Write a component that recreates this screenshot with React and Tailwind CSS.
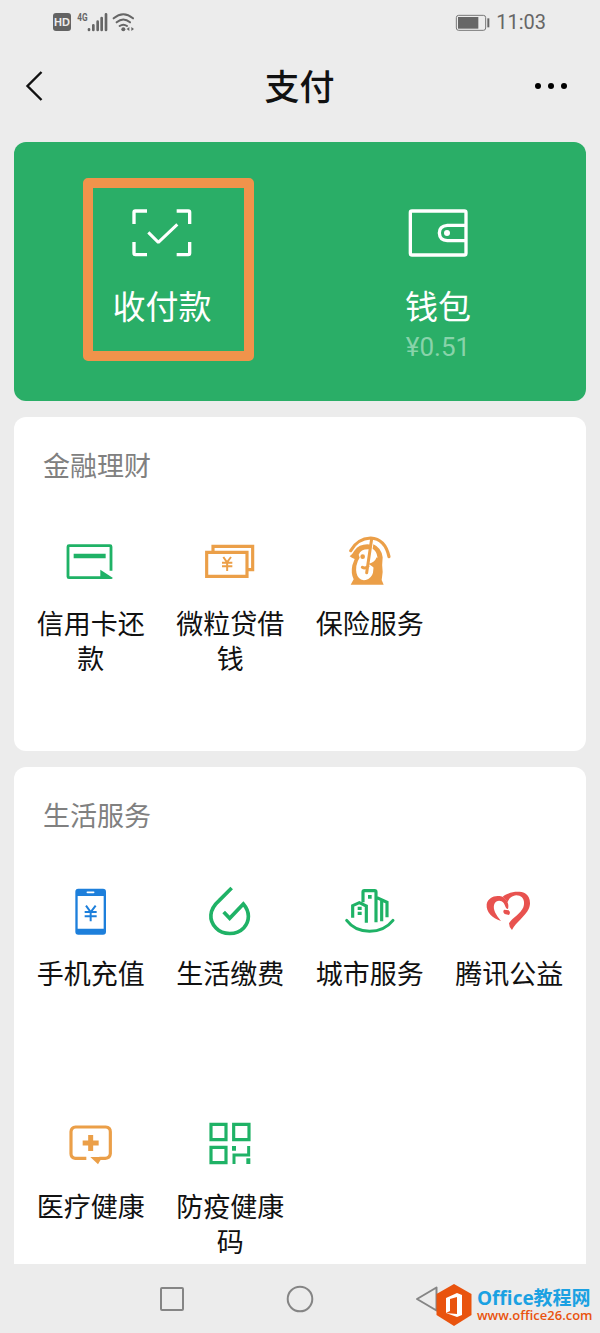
import clsx from 'clsx'

const GREEN = '#1fb266'
const ORANGE = '#eb9f48'
const BLUE = '#1d7fdb'
const RED = '#e8524f'

const ServiceIcon = ({ origin, children }) => (
  <svg viewBox={`${origin} 180 180`} className="w-[60px] h-[60px]" fill="none">
    {children}
  </svg>
)

const CreditCardIcon = () => (
  <ServiceIcon origin="93 36">
    <path d="M243 152V80Q243 77 240 77H117Q114 77 114 80V170Q114 173 117 173H232" stroke={GREEN} strokeWidth="8.5" />
    <path d="M131 101H227V115H131Z" fill={GREEN} />
    <path d="M211 149L248 173Q248 177 243 177H211Z" fill={GREEN} />
  </ServiceIcon>
)

const LoanIcon = () => (
  <ServiceIcon origin="512 36">
    <path d="M551 94V79H670V149H656" stroke={ORANGE} strokeWidth="9.5" />
    <path d="M532 97H653V169H532Z" stroke={ORANGE} strokeWidth="9.5" />
    <path d="M582 111L593 127L605 111M578 128H609M578 139H609M593.500 127V153" stroke={ORANGE} strokeWidth="6" />
  </ServiceIcon>
)

const InsuranceIcon = () => (
  <ServiceIcon origin="121 36">
    <path d="M153 92Q173 56 213 54Q256 56 268 110" stroke={ORANGE} strokeWidth="9.5" strokeLinecap="round" />
    <path
      d="M150 109Q158 103 164 92Q178 73 203 73L213 74L210 88Q184 86 177 104L180 113Q173 122 170 138Q167 163 178 174Q184 182 198 180Q216 174 220 158L222 138Q235 127 233 110Q231 94 219 86L221 73Q245 83 249 112Q246 136 249 156L246 180L252 194H153L162 178Q153 160 158 136L165 117Q156 114 150 109Z"
      fill={ORANGE}
    />
    <path d="M216 56L201 158M188 142Q196 147 205 139" stroke={ORANGE} strokeWidth="9" strokeLinecap="round" />
    <path d="M206 131Q224 130 231 112L240 120L232 150L216 138Z" fill={ORANGE} />
    <circle cx="189" cy="110" r="7" fill={ORANGE} />
  </ServiceIcon>
)

const PhoneIcon = () => (
  <ServiceIcon origin="93 36">
    <rect x="136" y="56" width="92" height="138" rx="9" fill={BLUE} />
    <path d="M143 78H221V176H143Z" fill="#fff" />
    <path d="M172 67H191" stroke="#fff" strokeWidth="5" strokeLinecap="round" />
    <path d="M168 107L182 126L197 107M164 126H200M164 139H200M182 126V154" stroke={BLUE} strokeWidth="6" />
  </ServiceIcon>
)

const BillIcon = () => (
  <ServiceIcon origin="512 36">
    <path
      d="M607 54L570 91C538 119 538 151 560 174C580 196 622 196 643 174C662 153 662 125 642 102L601 145L583 126"
      stroke={GREEN}
      strokeWidth="11"
    />
  </ServiceIcon>
)

const CityIcon = () => (
  <ServiceIcon origin="121 36">
    <path
      d="M159 143V107L179 98L200 108V158M190 97V66Q190 62 194 62H225Q229 62 229 66V157M230 82L262 97V142M246 90V154"
      stroke={GREEN}
      strokeWidth="9.5"
    />
    <path d="M141 151C173 194 245 195 280 151" stroke={GREEN} strokeWidth="9" strokeLinecap="round" />
    <path d="M174 110H186V120H174ZM174 125H186V135H174ZM205 75H216V86H205Z" fill={GREEN} />
  </ServiceIcon>
)

const CharityIcon = () => (
  <ServiceIcon origin="540 36">
    <path
      d="M606 153C579 145 561 127 563 103C566 83 588 74 606 79C622 84 632 102 627 117C620 117 619 107 614 99C606 90 592 90 586 102C580 119 592 136 606 153Z"
      fill={RED}
    />
    <path
      d="M611 80C628 66 660 61 678 70C693 78 697 101 689 117C680 138 651 156 639 180Q630 172 630 160C640 143 665 132 673 112C680 91 670 76 652 76C638 77 628 87 626 97Q620 87 611 80Z"
      fill={RED}
    />
    <path d="M615 119L629 121Q636 127 630 135L617 132Q610 126 615 119Z" fill={RED} />
  </ServiceIcon>
)

const MedicalIcon = () => (
  <ServiceIcon origin="93 15">
    <path
      d="M169 145H136Q123 143 123 131V65Q124 52 137 51H227Q241 52 241 65V131Q240 144 226 145H208"
      stroke={ORANGE}
      strokeWidth="9.5"
    />
    <path d="M181 141H217L204 163Z" fill={ORANGE} />
    <path d="M182 75V123M158 99H206" stroke={ORANGE} strokeWidth="15" />
  </ServiceIcon>
)

const HealthCodeIcon = () => (
  <ServiceIcon origin="512 15">
    <path d="M545 43H590V89H545ZM613 43H659V89H613ZM545 112H590V158H545Z" stroke={GREEN} strokeWidth="9.5" />
    <path d="M608 108H620V122H608ZM651 145H663V162H651Z" fill={GREEN} />
    <path d="M614 162V135H658V108" stroke={GREEN} strokeWidth="9" />
  </ServiceIcon>
)

const ScanIcon = () => (
  <svg viewBox="177 108 198 162" className="w-[66px] h-[54px]" fill="none" stroke="#fff" strokeWidth="10">
    <path d="M192 162V127Q192 123 196 123H231M320 123H355Q359 123 359 127V162M359 216V250Q359 254 355 254H320M231 254H196Q192 254 192 250V216" />
    <path d="M235 187L265 217L322 163" strokeWidth="9" strokeLinejoin="bevel" />
  </svg>
)

const WalletIcon = () => (
  <svg viewBox="75 48 198 162" className="w-[66px] h-[54px]" fill="none" stroke="#fff" strokeWidth="10">
    <rect x="91" y="63" width="167" height="132" rx="5" />
    <path d="M258 106H202Q178 108 178 129Q179 151 202 152H258" />
    <circle cx="201" cy="129" r="9" fill="#fff" stroke="none" />
  </svg>
)

const StatusBar = () => (
  <div className="flex h-11 items-center pl-[53px] pr-[54px] text-[#666]">
    <div className="flex h-[18px] w-[18px] items-center justify-center rounded-[3px] bg-[#636363] font-['Liberation_Sans'] text-[11px] font-bold leading-none text-[#ececec]">
      HD
    </div>
    <svg viewBox="227 30 180 66" className="ml-[5px] h-[22px] w-[60px]" fill="none" stroke="#666" strokeLinecap="round">
      <text
        x="231"
        y="60"
        fontSize="32"
        fontWeight="700"
        textLength="31"
        lengthAdjust="spacingAndGlyphs"
        fill="#666"
        stroke="none"
        className="font-[Roboto]"
      >
        4G
      </text>
      <path d="M266 85V87M279 73V87M292 62V87M304 51V87M317 40V87" strokeWidth="8" />
      <path d="M340 52Q369 28 398 52M349 64Q369 47 389 64M358 75Q369 67 380 75" strokeWidth="6" />
      <circle cx="369" cy="85" r="6" fill="#666" stroke="none" />
      <path d="M379 84L387 78V90ZM401 84L393 78V90Z" fill="#666" stroke="none" />
    </svg>
    <svg viewBox="471 36 105 57" className="ml-auto h-[19px] w-[35px]" fill="none">
      <rect x="475" y="43" width="88" height="45" rx="7" stroke="#777" strokeWidth="3" />
      <rect x="480" y="48" width="61" height="35" fill="#666" />
      <path d="M571 52V79" stroke="#666" strokeWidth="6" />
    </svg>
    <span className="ml-[6px] font-[Roboto] text-[20px] leading-none">11:03</span>
  </div>
)

const NavBar = () => (
  <header className="flex h-[86px] items-center justify-between pl-[25px] pr-[33px] text-[#111]">
    <svg viewBox="0 0 18 32" className="h-8 w-[39px] -translate-y-px" preserveAspectRatio="xMinYMid" fill="none">
      <path d="M16.500 2L2.500 16L16.500 30" stroke="#111" strokeWidth="2.400" />
    </svg>
    <h1 className="pb-[5px] text-[35px] font-medium leading-none">支付</h1>
    <div className="flex w-8 justify-between -translate-y-[1px]">
      <i className="h-[6px] w-[6px] rounded-full bg-black" />
      <i className="h-[6px] w-[6px] rounded-full bg-black" />
      <i className="h-[6px] w-[6px] rounded-full bg-black" />
    </div>
  </header>
)

const PayCard = () => (
  <section className="relative mt-3 flex h-[259px] rounded-[12px] bg-[#2aae67] px-[10px] pt-16 text-white">
    <div className="flex flex-1 flex-col items-center">
      <ScanIcon />
      <span className="mt-[27px] text-[33px] leading-9">收付款</span>
    </div>
    <div className="flex flex-1 flex-col items-center">
      <WalletIcon />
      <span className="mt-[27px] text-[33px] leading-9">钱包</span>
      <span className="mt-[10px] font-[Roboto] text-[26px] leading-7 text-[#88d3aa]">¥0.51</span>
    </div>
    {/* Highlight frame */}
    <div className="absolute left-[69px] top-9 h-[183px] w-[171px] rounded-[5px] border-[10px] border-[#f0934b]" />
  </section>
)

const ServiceSection = ({ title, items, className }) => (
  <section className={clsx('mt-4 overflow-hidden bg-white', className)}>
    <h2 className="h-[101px] pl-[29px] pt-[30px] text-[27px] leading-9 text-[#808080]">{title}</h2>
    <div className="grid grid-cols-4 pl-[7px] pr-[7px]">
      {items.map(({ label, Icon }) => (
        <div key={label} className="flex h-[233px] flex-col items-center pt-[14px]">
          <Icon />
          <span className="mt-[13px] w-[112px] text-center text-[27px] leading-[35px]">{label}</span>
        </div>
      ))}
    </div>
  </section>
)

const finance = [
  { label: '信用卡还款', Icon: CreditCardIcon },
  { label: '微粒贷借钱', Icon: LoanIcon },
  { label: '保险服务', Icon: InsuranceIcon },
]

const life = [
  { label: '手机充值', Icon: PhoneIcon },
  { label: '生活缴费', Icon: BillIcon },
  { label: '城市服务', Icon: CityIcon },
  { label: '腾讯公益', Icon: CharityIcon },
  { label: '医疗健康', Icon: MedicalIcon },
  { label: '防疫健康码', Icon: HealthCodeIcon },
]

const SystemNav = () => (
  <footer className="flex h-[69px] items-center pl-[159px] text-[#858585]">
    <svg viewBox="0 0 26 26" className="h-[26px] w-[26px]" fill="none" stroke="currentColor" strokeWidth="2">
      <rect x="2" y="2" width="22" height="22" rx="1" />
    </svg>
    <svg viewBox="0 0 28 28" className="ml-[101px] h-7 w-7" fill="none" stroke="currentColor" strokeWidth="2">
      <circle cx="14" cy="14" r="12.300" />
    </svg>
    <svg viewBox="0 0 24 28" className="ml-[101px] h-7 w-6" fill="none" stroke="currentColor" strokeWidth="2">
      <path d="M21.500 2.500V25.500L2 14Z" strokeLinejoin="round" />
    </svg>
  </footer>
)

const Watermark = () => (
  <div className="absolute bottom-[6px] left-[436px] flex items-center">
    <svg viewBox="0 0 36 44" className="h-11 w-9" fill="none">
      <path d="M18 1L35.500 11V32L18 43L0.500 32V11Z" fill="#e9530e" />
      <path d="M10 15L21 10L26 12V32L21 34L10 30L21 31V14L14 16V28L10 30Z" fill="#fff" />
    </svg>
    <div className="ml-[5px] flex flex-col">
      <span className="whitespace-nowrap font-['Open_Sans','Noto_Sans_CJK_SC',sans-serif] text-[19px] font-bold leading-[19px] text-[#1ba1e2]">
        Office教程网
      </span>
      <span className="whitespace-nowrap font-['Open_Sans'] text-[13px] font-semibold leading-[14px] text-[#e9530e]">
        www.office26.com
      </span>
    </div>
  </div>
)

const App = () => (
  <div className="relative h-[1333px] w-[600px] overflow-hidden bg-[#ececec] font-['Noto_Sans_CJK_SC',sans-serif] text-[#111]">
    <StatusBar />
    <NavBar />
    <main className="px-[14px]">
      <PayCard />
      <ServiceSection title="金融理财" items={finance} className="h-[334px] rounded-[12px]" />
      <ServiceSection title="生活服务" items={life} className="h-[497px] rounded-t-[12px]" />
    </main>
    <SystemNav />
    <Watermark />
  </div>
)

export default App
